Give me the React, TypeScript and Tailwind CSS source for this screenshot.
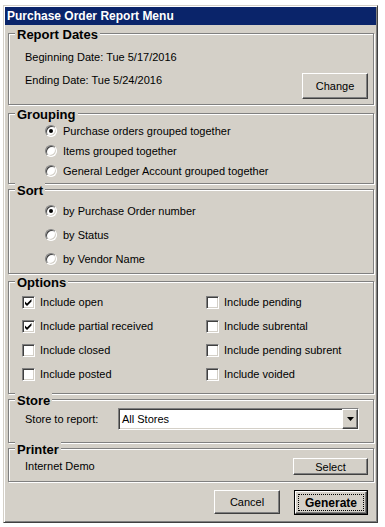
import type { ReactNode } from "react";

const raised =
  "border border-t-white border-l-white border-r-[#404040] border-b-[#404040] bg-[#d4d0c8] shadow-[inset_-1px_-1px_0_#808080]";
const sunken =
  "border border-t-[#808080] border-l-[#808080] border-r-white border-b-white bg-white shadow-[inset_1px_1px_0_#404040,inset_-1px_-1px_0_#d4d0c8]";

function GroupBox({ title, className, children }: { title: string; className: string; children?: ReactNode }) {
  return (
    <div className={`ml-[3px] w-[366px] border border-[#808080] shadow-[inset_1px_1px_0_#fff,1px_1px_0_#fff] ${className}`}>
      <div className="-mt-[7px] ml-[6px] w-fit bg-[#d4d0c8] px-[2px] text-[13px] font-bold leading-[16px]">{title}</div>
      {children}
    </div>
  );
}

function Radio({ on }: { on?: boolean }) {
  return (
    <span className={`flex h-[12px] w-[12px] shrink-0 items-center justify-center rounded-full ${sunken}`}>
      {on && <span className="h-[4px] w-[4px] rounded-full bg-black" />}
    </span>
  );
}

function Check({ on }: { on?: boolean }) {
  return (
    <span className={`flex h-[13px] w-[13px] shrink-0 items-center justify-center ${sunken}`}>
      {on && (
        <svg width="9" height="9" viewBox="0 0 9 9">
          <path d="M1 3.5 L3 5.5 L7.5 1 L7.5 3.5 L3 8 L1 6 Z" fill="#000" />
        </svg>
      )}
    </span>
  );
}

function Button({ className, children }: { className: string; children: ReactNode }) {
  return (
    <div className={`flex items-center justify-center text-[11px] leading-[14px] ${raised} ${className}`}>
      {children}
    </div>
  );
}

const grouping = [
  { label: "Purchase orders grouped together", on: true },
  { label: "Items grouped together" },
  { label: "General Ledger Account grouped together" },
];

const sort = [
  { label: "by Purchase Order number", on: true },
  { label: "by Status" },
  { label: "by Vendor Name" },
];

const options = [
  { label: "Include open", on: true },
  { label: "Include pending" },
  { label: "Include partial received", on: true },
  { label: "Include subrental" },
  { label: "Include closed" },
  { label: "Include pending subrent" },
  { label: "Include posted" },
  { label: "Include voided" },
];

export default function App() {
  return (
    <div className="min-h-screen bg-white pl-[3px] pt-[5px] font-['Liberation_Sans',Arial,sans-serif] text-black">
      <div className="h-[518px] w-[375px] border border-t-[#d4d0c8] border-l-[#d4d0c8] border-r-[#404040] border-b-[#404040] bg-[#d4d0c8] p-[1px] shadow-[inset_1px_1px_0_#fff,inset_-1px_-1px_0_#808080]">
        <div className="h-[18px] bg-[#0a246a] pl-[2px] text-[12px] font-bold leading-[18px] text-white">
          Purchase Order Report Menu
        </div>

        {/* Report dates */}
        <GroupBox title="Report Dates" className="mt-[8px] h-[72px]">
          <div className="mt-[7px] pl-[16px] text-[11px] leading-[14px]">Beginning Date: Tue 5/17/2016</div>
          <div className="mt-[9px] flex items-start justify-between pl-[16px] pr-[5px]">
            <span className="text-[11px] leading-[14px]">Ending Date: Tue 5/24/2016</span>
            <Button className="h-[26px] w-[66px]">Change</Button>
          </div>
        </GroupBox>

        <GroupBox title="Grouping" className="mt-[8px] h-[71px]">
          <div className="-mt-[2px] pl-[36px]">
            {grouping.map((g) => (
              <div key={g.label} className="flex h-[20px] items-center gap-[6px] text-[11px]">
                <Radio on={g.on} />
                <span>{g.label}</span>
              </div>
            ))}
          </div>
        </GroupBox>

        <GroupBox title="Sort" className="mt-[5px] h-[85px]">
          <div className="pl-[36px]">
            {sort.map((s) => (
              <div key={s.label} className="flex h-[24px] items-center gap-[6px] text-[11px]">
                <Radio on={s.on} />
                <span>{s.label}</span>
              </div>
            ))}
          </div>
        </GroupBox>

        <GroupBox title="Options" className="mt-[7px] h-[113px]">
          <div className="-mt-[1px] grid grid-cols-[184px_1fr] pl-[13px]">
            {options.map((o) => (
              <div key={o.label} className="flex h-[24px] items-center gap-[5px] text-[11px]">
                <Check on={o.on} />
                <span>{o.label}</span>
              </div>
            ))}
          </div>
        </GroupBox>

        <GroupBox title="Store" className="mt-[5px] h-[44px]">
          <div className="-mt-[1px] flex items-center pl-[16px] text-[11px]">
            <span className="w-[93px]">Store to report:</span>
            <div className={`flex h-[22px] w-[241px] items-center ${sunken}`}>
              <span className="flex-1 pl-[3px]">All Stores</span>
              <span className={`flex h-full w-[16px] items-center justify-center ${raised}`}>
                <svg width="7" height="4" viewBox="0 0 7 4">
                  <path d="M0 0 H7 L3.5 4 Z" fill="#000" />
                </svg>
              </span>
            </div>
          </div>
        </GroupBox>

        <GroupBox title="Printer" className="mt-[5px] h-[34px]">
          <div className="flex h-[17px] items-center justify-between pl-[16px] pr-[5px] text-[11px]">
            <span>Internet Demo</span>
            <Button className="h-[17px] w-[75px]">Select</Button>
          </div>
        </GroupBox>

        <div className="ml-[3px] mt-[8px] flex w-[366px] items-start justify-end gap-[14px] pr-[6px]">
          <Button className="h-[24px] w-[66px]">Cancel</Button>
          <div className="h-[25px] w-[74px] border border-black">
            <div className={`flex h-full w-full p-[2px] ${raised}`}>
              <span className="flex flex-1 items-center justify-center border border-dotted border-black text-[12px] font-bold">
                Generate
              </span>
            </div>
          </div>
        </div>
      </div>
    </div>
  );
}
